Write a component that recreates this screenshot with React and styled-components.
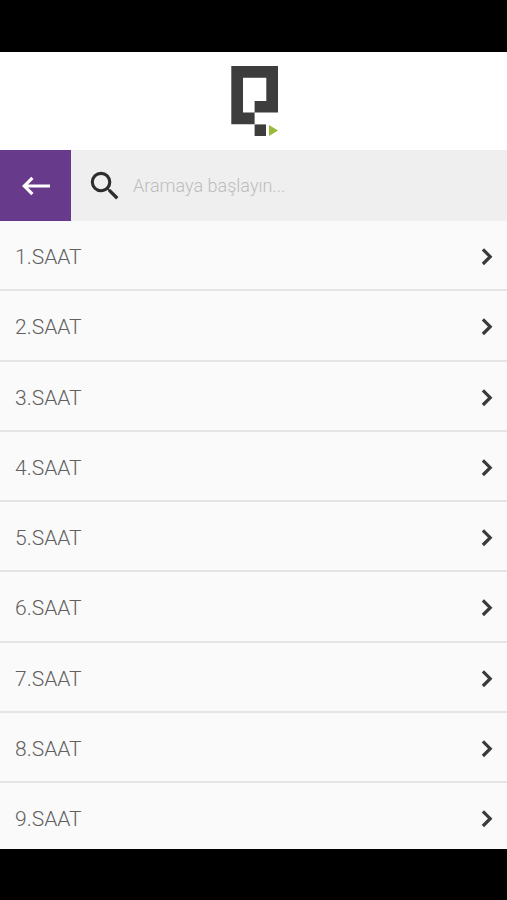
import styled, { createGlobalStyle } from "styled-components";
import { MdSearch } from "react-icons/md";

const GlobalStyle = createGlobalStyle`
  * {
    box-sizing: border-box;
  }

  body {
    margin: 0;
    background-color: #000;
    font-family: Roboto, "Noto Sans", sans-serif;
    font-weight: 300;
  }
`;

const Page = styled.div`
  display: flex;
  flex-direction: column;
  height: 100vh;
  padding: 52px 0 51px;
  background-color: #000;
`;

const Header = styled.header`
  display: flex;
  flex: none;
  align-items: center;
  justify-content: center;
  height: 98px;
  background-color: #fff;
`;

const Toolbar = styled.div`
  display: flex;
  flex: none;
  height: 71px;
  background-color: #efefef;
`;

const BackButton = styled.button`
  display: flex;
  align-items: center;
  justify-content: center;
  width: 71px;
  padding: 0;
  border: 0;
  background-color: #673a8b;
  color: #fff;
  cursor: pointer;
`;

const SearchLabel = styled.label`
  display: flex;
  flex: 1;
  align-items: center;
  gap: 9px;
  min-width: 0;
  padding: 0 15px;
  color: #2d2d2d;

  svg {
    flex: none;
  }
`;

const SearchInput = styled.input`
  flex: 1;
  min-width: 0;
  padding: 0;
  border: 0;
  outline: 0;
  background: transparent;
  color: #666;
  font: inherit;
  font-size: 18px;

  &::placeholder {
    color: #bdbdbd;
    opacity: 1;
  }
`;

const List = styled.ul`
  display: grid;
  flex: 1;
  grid-template-rows: repeat(8, 1fr) 66px;
  min-height: 0;
  margin: 0;
  padding: 0;
  overflow: hidden;
  list-style: none;
  background-color: #fafafa;
`;

const Item = styled.li`
  display: flex;
  min-height: 70px;
  border-bottom: 2px solid #e4e4e4;
`;

const ItemLink = styled.a`
  display: flex;
  flex: 1;
  align-items: center;
  justify-content: space-between;
  padding: 4px 14px 0 15px;
  color: #606060;
  font-size: 21px;
  line-height: 24px;
  text-decoration: none;

  svg {
    color: #3a3a3a;
  }
`;

const lessons = [1, 2, 3, 4, 5, 6, 7, 8, 9];

function Logo() {
  return (
    <svg width="49" height="70" viewBox="0 0 49 70" role="img" aria-label="Logo">
      <path
        fill="#3d3d3d"
        fillRule="evenodd"
        d="M2.3 0H49V46.6H25.6V58.2H2.3ZM14 11.7V46.6H25.6V35H37.3V11.7Z"
      />
      <path fill="#3d3d3d" d="M25.6 58.4H37V70H25.6Z" />
      <path fill="#9aba3a" d="M40 59L49 64.5L40 70Z" />
    </svg>
  );
}

function BackArrow() {
  return (
    <svg width="28" height="20" viewBox="0 0 28 20" aria-hidden="true">
      <path
        fill="none"
        stroke="currentColor"
        strokeWidth="3.2"
        d="M28 10H2.5M10.4 1.8L2.2 10L10.4 18.2"
      />
    </svg>
  );
}

function Chevron() {
  return (
    <svg width="12" height="18" viewBox="0 0 12 18" aria-hidden="true">
      <path
        fill="none"
        stroke="currentColor"
        strokeWidth="3.2"
        d="M1.9 1.4L9.2 8.7L1.9 16"
      />
    </svg>
  );
}

export default function App() {
  return (
    <>
      <GlobalStyle />
      <Page>
        <Header>
          <Logo />
        </Header>
        <Toolbar>
          <BackButton type="button" aria-label="Geri">
            <BackArrow />
          </BackButton>
          <SearchLabel>
            <MdSearch size={38} aria-hidden="true" />
            <SearchInput
              type="text"
              aria-label="Ara"
              placeholder="Aramaya başlayın..."
            />
          </SearchLabel>
        </Toolbar>
        <List>
          {lessons.map((lesson) => (
            <Item key={lesson}>
              <ItemLink href={`#saat-${lesson}`}>
                {lesson}.SAAT
                <Chevron />
              </ItemLink>
            </Item>
          ))}
        </List>
      </Page>
    </>
  );
}
